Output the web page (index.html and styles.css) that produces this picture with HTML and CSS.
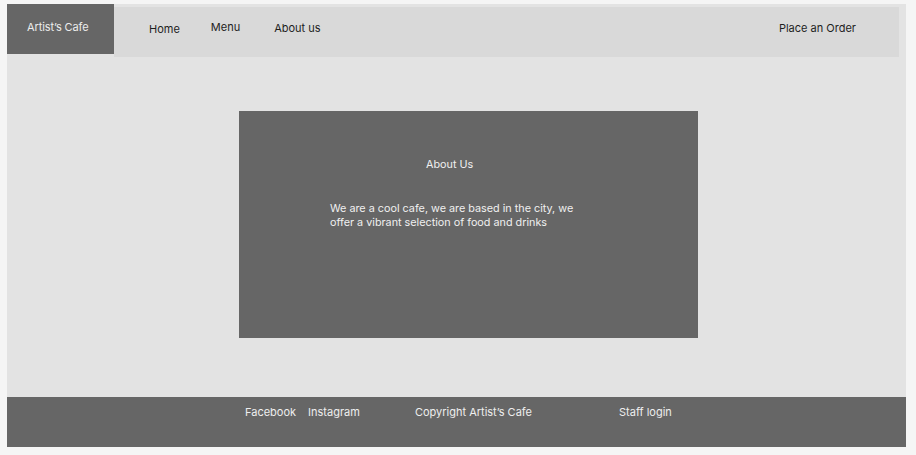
FILE: index.html
```html
<!DOCTYPE html>
<html>
<head>
<meta charset="utf-8">
<link rel="stylesheet" href="styles.css">
</head>
<body>
<div class="frame">
  <header class="header">
    <div class="logo">Artist’s Cafe</div>
    <nav class="nav">
      <a class="nav-home">Home</a>
      <a class="nav-menu">Menu</a>
      <a class="nav-about">About us</a>
      <a class="nav-order">Place an Order</a>
    </nav>
  </header>
  <main class="main">
    <section class="card">
      <h1 class="card-title">About Us</h1>
      <p class="card-text">We are a cool cafe, we are based in the city, we<br>offer a vibrant selection of food and drinks</p>
    </section>
  </main>
  <footer class="footer">
    <a class="f-facebook">Facebook</a>
    <a class="f-instagram">Instagram</a>
    <span class="f-copy">Copyright Artist’s Cafe</span>
    <a class="f-staff">Staff login</a>
  </footer>
</div>
</body>
</html>
```
FILE: styles.css
```css
html, body {
  margin: 0;
  padding: 0;
}
body {
  background: #f5f5f5;
  font-family: Inter, "Noto Sans", sans-serif;
  font-size: 11px;
}
.frame {
  margin: 4px 0 0 7px;
  width: 899px;
  height: 443px;
  background: #e3e3e3;
  display: flex;
  flex-direction: column;
}
.header {
  display: flex;
  height: 53px;
  flex: none;
}
.logo {
  width: 107px;
  height: 50px;
  background: #666666;
  color: #ececec;
  padding: 16px 0 0 20px;
  box-sizing: border-box;
  line-height: 14px;
  letter-spacing: -0.1px;
}
.nav {
  margin-top: 3px;
  width: 785px;
  height: 50px;
  background: #d9d9d9;
  display: flex;
  align-items: flex-start;
  color: #1e1e1e;
  line-height: 14px;
}
.nav a { display: block; }
.nav-home { margin: 15px 0 0 35px; }
.nav-menu { margin: 13px 0 0 31px; }
.nav-about { margin: 14px 0 0 34px; }
.nav-order { margin: 14px 43px 0 auto; }
.main {
  flex: 1;
  padding: 54px 0 0 232px;
}
.card {
  width: 459px;
  height: 227px;
  background: #666666;
  color: #f0f0f0;
  box-sizing: border-box;
  padding-top: 47px;
}
.card-title {
  margin: 0 0 0 187px;
  font-size: 10.8px;
  font-weight: 400;
  line-height: 14px;
}
.card-text {
  margin: 30px 0 0 91px;
  font-size: 10.8px;
  line-height: 13.5px;
}
.footer {
  height: 50px;
  flex: none;
  background: #666666;
  color: #eeeeee;
  display: flex;
  align-items: flex-start;
  padding-top: 8px;
  box-sizing: border-box;
  line-height: 14px;
}
.footer a, .footer span { display: block; }
.f-facebook { margin-left: 238px; }
.f-instagram { margin-left: 12px; }
.f-copy { margin-left: 55px; }
.f-staff { margin-left: 87px; }
```
